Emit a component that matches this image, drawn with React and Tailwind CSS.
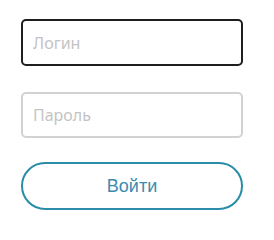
import React from 'react';

export default function App() {
  return (
    <div className="w-[274px] h-[240px] bg-white pt-[19px] px-[21px] flex flex-col">
      <input
        type="text"
        placeholder="Логин"
        className="w-[222px] h-[47px] rounded-[5px] border-2 border-[#1e1e1e] px-[10px] text-[16px] text-[#333] placeholder:text-[#c4c4c4] outline-none font-['Noto_Sans',sans-serif]"
      />
      <input
        type="password"
        placeholder="Пароль"
        className="mt-[26px] w-[222px] h-[46px] rounded-[5px] border-2 border-[#d2d2d2] px-[10px] text-[16px] text-[#333] placeholder:text-[#c4c4c4] outline-none font-['Noto_Sans',sans-serif]"
      />
      <button
        className="mt-[24px] w-[222px] h-[48px] rounded-full border-2 border-[#2a8ca8] bg-white text-[18px] text-[#3a8bb0] font-['Liberation_Sans',sans-serif]"
      >
        Войти
      </button>
    </div>
  );
}
